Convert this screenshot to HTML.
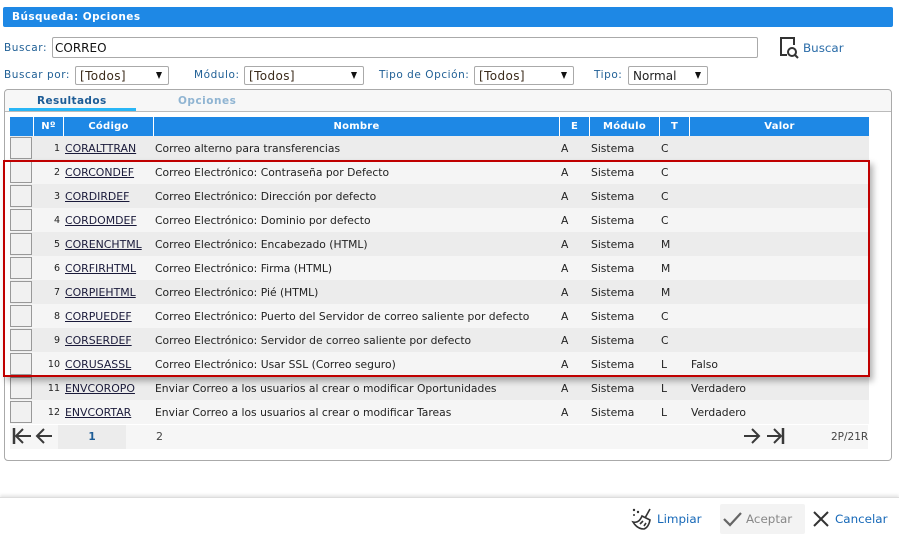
<!DOCTYPE html>
<html><head><meta charset="utf-8">
<style>
html,body{margin:0;padding:0;background:#fff}
body{width:899px;height:539px;position:relative;overflow:hidden;font-family:"DejaVu Sans",Verdana,sans-serif;font-size:10.75px;color:#222}
.a{position:absolute;white-space:nowrap}
.lbl{color:#1f5f95;font-size:10.5px;line-height:14px;letter-spacing:.55px}
.sel{position:absolute;height:17px;border:1px solid #aaa;border-radius:2px;background:#fff;font-size:12px;line-height:18px;color:#222;padding-left:4px;box-sizing:content-box}
.sel b{position:absolute;right:6px;top:5px;width:0;height:0;border-left:3.5px solid transparent;border-right:3.5px solid transparent;border-top:7px solid #111}
.t{letter-spacing:.4px;color:#3a2a1a}
.h{position:absolute;top:117px;height:19px;background:#1e88e5;color:#fff;font-weight:bold;font-size:10px;line-height:20px;text-align:center;letter-spacing:.25px}
.row{position:absolute;left:10px;width:859px;height:24px;line-height:25px}
.row span{position:absolute;top:0;white-space:nowrap}
.row i{position:absolute;left:0;top:1px;width:20px;height:20px;border:1px solid #999;background:#f1f1f1;box-sizing:content-box}
.row u{color:#1a1a3a;font-size:10.9px}
.o{background:#ececec}.e{background:#f5f5f5}
.n{left:24px;width:26px;text-align:right;font-size:9.5px}
</style></head><body>

<div class="a" style="left:3px;top:7px;width:890px;height:20px;background:#1e88e5;border-radius:2px;color:#fff;font-weight:bold;font-size:10.5px;line-height:21px;text-indent:9px;letter-spacing:.44px">Búsqueda: Opciones</div>

<div class="a lbl" style="left:4px;top:41px">Buscar:</div>
<div class="a" style="left:52px;top:37px;width:704px;height:19px;border:1px solid #aaa;border-radius:2px;font-size:12px;line-height:20px;text-indent:2px;color:#111">CORREO</div>

<svg class="a" style="left:779px;top:36px" width="22" height="24" viewBox="0 0 22 24" fill="none" stroke="#333" stroke-width="2"><path d="M8 19H2V2H15V9"/><circle cx="13" cy="16" r="4"/><path d="M16 19L19 22"/></svg>
<div class="a" style="left:803px;top:41px;color:#2a6ca8;font-size:11.9px;line-height:15px">Buscar</div>

<div class="a lbl" style="left:4px;top:68px">Buscar por:</div>
<div class="sel" style="left:75px;top:66px;width:88px"><span class="t">[Todos]</span><b></b></div>
<div class="a lbl" style="left:194px;top:68px">Módulo:</div>
<div class="sel" style="left:244px;top:66px;width:114px"><span class="t">[Todos]</span><b></b></div>
<div class="a lbl" style="left:379px;top:68px">Tipo de Opción:</div>
<div class="sel" style="left:474px;top:66px;width:94px"><span class="t">[Todos]</span><b></b></div>
<div class="a lbl" style="left:594px;top:68px">Tipo:</div>
<div class="sel" style="left:628px;top:66px;width:74px">Normal<b></b></div>

<div class="a" style="left:4px;top:89px;width:886px;height:370px;border:1px solid #aaa;border-radius:4px"></div>
<div class="a" style="left:5px;top:90px;width:886px;height:21px;background:#f7f7f7;border-bottom:1px solid #bbb;border-radius:4px 4px 0 0"></div>
<div class="a" style="left:9px;top:108px;width:127px;height:3px;background:#29b6f6"></div>
<div class="a" style="left:37px;top:94px;font-weight:bold;font-size:10.5px;line-height:14px;color:#1d5c96;letter-spacing:.4px">Resultados</div>
<div class="a" style="left:178px;top:94px;font-weight:bold;font-size:10.5px;line-height:14px;color:#8fb4d2;letter-spacing:.5px">Opciones</div>

<div class="h" style="left:10px;width:23px"></div>
<div class="h" style="left:34px;width:29px">Nº</div>
<div class="h" style="left:64px;width:89px">Código</div>
<div class="h" style="left:154px;width:405px">Nombre</div>
<div class="h" style="left:560px;width:29px">E</div>
<div class="h" style="left:590px;width:69px">Módulo</div>
<div class="h" style="left:660px;width:29px">T</div>
<div class="h" style="left:690px;width:179px">Valor</div>

<div class="row o" style="top:136px"><i></i><span class="n">1</span><span style="left:55px"><u>CORALTTRAN</u></span><span style="left:145px">Correo alterno para transferencias</span><span style="left:551px">A</span><span style="left:581px">Sistema</span><span style="left:651px">C</span></div>
<div class="row e" style="top:160px"><i></i><span class="n">2</span><span style="left:55px"><u>CORCONDEF</u></span><span style="left:145px">Correo Electrónico: Contraseña por Defecto</span><span style="left:551px">A</span><span style="left:581px">Sistema</span><span style="left:651px">C</span></div>
<div class="row o" style="top:184px"><i></i><span class="n">3</span><span style="left:55px"><u>CORDIRDEF</u></span><span style="left:145px">Correo Electrónico: Dirección por defecto</span><span style="left:551px">A</span><span style="left:581px">Sistema</span><span style="left:651px">C</span></div>
<div class="row e" style="top:208px"><i></i><span class="n">4</span><span style="left:55px"><u>CORDOMDEF</u></span><span style="left:145px">Correo Electrónico: Dominio por defecto</span><span style="left:551px">A</span><span style="left:581px">Sistema</span><span style="left:651px">C</span></div>
<div class="row o" style="top:232px"><i></i><span class="n">5</span><span style="left:55px"><u>CORENCHTML</u></span><span style="left:145px">Correo Electrónico: Encabezado (HTML)</span><span style="left:551px">A</span><span style="left:581px">Sistema</span><span style="left:651px">M</span></div>
<div class="row e" style="top:256px"><i></i><span class="n">6</span><span style="left:55px"><u>CORFIRHTML</u></span><span style="left:145px">Correo Electrónico: Firma (HTML)</span><span style="left:551px">A</span><span style="left:581px">Sistema</span><span style="left:651px">M</span></div>
<div class="row o" style="top:280px"><i></i><span class="n">7</span><span style="left:55px"><u>CORPIEHTML</u></span><span style="left:145px">Correo Electrónico: Pié (HTML)</span><span style="left:551px">A</span><span style="left:581px">Sistema</span><span style="left:651px">M</span></div>
<div class="row e" style="top:304px"><i></i><span class="n">8</span><span style="left:55px"><u>CORPUEDEF</u></span><span style="left:145px">Correo Electrónico: Puerto del Servidor de correo saliente por defecto</span><span style="left:551px">A</span><span style="left:581px">Sistema</span><span style="left:651px">C</span></div>
<div class="row o" style="top:328px"><i></i><span class="n">9</span><span style="left:55px"><u>CORSERDEF</u></span><span style="left:145px">Correo Electrónico: Servidor de correo saliente por defecto</span><span style="left:551px">A</span><span style="left:581px">Sistema</span><span style="left:651px">C</span></div>
<div class="row e" style="top:352px"><i></i><span class="n">10</span><span style="left:55px"><u>CORUSASSL</u></span><span style="left:145px">Correo Electrónico: Usar SSL (Correo seguro)</span><span style="left:551px">A</span><span style="left:581px">Sistema</span><span style="left:651px">L</span><span style="left:681px">Falso</span></div>
<div class="row o" style="top:376px"><i></i><span class="n">11</span><span style="left:55px"><u>ENVCOROPO</u></span><span style="left:145px">Enviar Correo a los usuarios al crear o modificar Oportunidades</span><span style="left:551px">A</span><span style="left:581px">Sistema</span><span style="left:651px">L</span><span style="left:681px">Verdadero</span></div>
<div class="row e" style="top:400px"><i></i><span class="n">12</span><span style="left:55px"><u>ENVCORTAR</u></span><span style="left:145px">Enviar Correo a los usuarios al crear o modificar Tareas</span><span style="left:551px">A</span><span style="left:581px">Sistema</span><span style="left:651px">L</span><span style="left:681px">Verdadero</span></div>

<div class="a" style="left:3px;top:160px;width:863px;height:213px;border:2px solid #c00000;box-shadow:3px 4px 6px rgba(0,0,0,.3)"></div>

<div class="a" style="left:10px;top:425px;width:858px;height:24px;background:#f6f6f6"></div>
<div class="a" style="left:58px;top:425px;width:68px;height:24px;background:#ececec;text-align:center;line-height:25px;color:#1d5c96;font-weight:bold;font-size:10.5px">1</div>
<div class="a" style="left:156px;top:425px;line-height:24px;color:#444;font-size:11px">2</div>
<svg class="a" style="left:12px;top:427px" width="44" height="20" viewBox="0 0 44 20" fill="none" stroke="#3a3a3a" stroke-width="2"><path d="M2 1V17" stroke-width="2.5"/><path d="M19 9H4M11 2L4 9L11 16"/><path d="M40 9H26M32 2L25 9L32 16"/></svg>
<svg class="a" style="left:742px;top:427px" width="44" height="20" viewBox="0 0 44 20" fill="none" stroke="#3a3a3a" stroke-width="2"><path d="M2 9H17M10 2L17 9L10 16"/><path d="M25 9H39M32 2L39 9L32 16"/><path d="M41 1V17" stroke-width="2.5"/></svg>
<div class="a" style="left:831px;top:425px;line-height:25px;color:#444;font-size:10.5px">2P/21R</div>

<div class="a" style="left:0;top:497px;width:899px;height:42px;border-top:1px solid #ddd;box-shadow:0 -2px 3px rgba(0,0,0,.1);background:#fff"></div>

<svg class="a" style="left:631px;top:507px" width="24" height="24" viewBox="0 0 24 24" fill="none" stroke="#333" stroke-width="1.6"><circle cx="3" cy="3" r="1.2" fill="#333" stroke="none"/><circle cx="7" cy="5" r="1.2" fill="#333" stroke="none"/><circle cx="3" cy="8" r="1" fill="#333" stroke="none"/><path d="M19 2L14 11"/><path d="M11 9L19 13C18 18 16 21 13 22C9 22 5 20 2 15C6 16 9 14 11 9Z"/><path d="M9 17L12 14M13 19L15 16"/></svg>
<div class="a" style="left:657px;top:512px;color:#1769b8;font-size:11.9px;line-height:15px">Limpiar</div>

<div class="a" style="left:720px;top:504px;width:85px;height:30px;background:#f3f3f3;border-radius:2px"></div>
<svg class="a" style="left:722px;top:509px" width="22" height="20" viewBox="0 0 22 20" fill="none" stroke="#666" stroke-width="2.2"><path d="M2 10L8 16L19 4"/></svg>
<div class="a" style="left:746px;top:512px;color:#888;font-size:11.9px;line-height:15px">Aceptar</div>

<svg class="a" style="left:812px;top:510px" width="18" height="18" viewBox="0 0 18 18" fill="none" stroke="#333" stroke-width="2"><path d="M2 2L16 16M16 2L2 16"/></svg>
<div class="a" style="left:835px;top:512px;color:#1769b8;font-size:11.9px;line-height:15px">Cancelar</div>

</body></html>
